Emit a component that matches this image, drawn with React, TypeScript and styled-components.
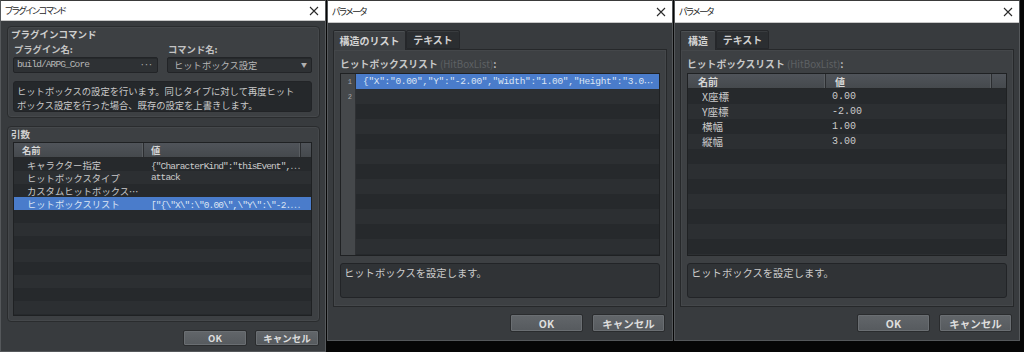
import React from 'react';
import styled, { createGlobalStyle } from 'styled-components';

const jp = `"Noto Sans CJK JP", "Noto Sans", sans-serif`;
const mono = `"Liberation Mono", "DejaVu Sans Mono", monospace`;

const GlobalStyle = createGlobalStyle`
  html, body { margin: 0; padding: 0; background: #060606; }
  body { font-family: ${jp}; }
  * { box-sizing: border-box; }
`;

const Screen = styled.div`
  display: flex;
  align-items: flex-start;
  gap: 1px;
  width: 1024px;
  height: 352px;
  overflow: hidden;
  background: #060606;
`;

const Window = styled.div<{ $w: number; $h: number }>`
  flex: none;
  width: ${p => p.$w}px;
  height: ${p => p.$h}px;
  display: flex;
  flex-direction: column;
  background: #383b3e;
  border: 1px solid #55585b;
  border-top-color: #3a3a3a;
`;

const TitleBar = styled.div<{ $h: number }>`
  flex: none;
  height: ${p => p.$h}px;
  background: #ffffff;
  display: flex;
  align-items: center;
  justify-content: space-between;
  padding: 0 6px 0 4px;
  border-bottom: 1px solid #c8c8c8;
`;

const TitleText = styled.span`
  font-family: ${jp};
  font-size: 9px;
  line-height: 12px;
  color: #1e1e1e;
  font-feature-settings: "palt";
  letter-spacing: -1.3px;
`;

const CloseSvg = styled.svg`
  width: 10px;
  height: 10px;
  flex: none;
`;

const CloseIcon = () => (
  <CloseSvg viewBox="0 0 10 10">
    <path d="M1 1 L9 9 M9 1 L1 9" stroke="#2a2a2a" strokeWidth="1.1" fill="none" />
  </CloseSvg>
);

/* ---------- Dialog 1 ---------- */

const CommandBody = styled.div`
  flex: 1;
  display: flex;
  flex-direction: column;
  gap: 8px;
  padding: 5px 5px 0 6px;
`;

const GroupBox = styled.div<{ $h: number }>`
  flex: none;
  height: ${p => p.$h}px;
  display: flex;
  flex-direction: column;
  background: #3d4043;
  border: 1px solid #2a2c2e;
  border-radius: 4px;
  box-shadow: inset 0 0 0 1px #45484b;
  padding: 0 7px 5px 5px;
`;

const GroupTitle = styled.div`
  height: 14px;
  line-height: 14px;
  margin-left: -2px;
  font-size: 9.5px;
  font-weight: 700;
  color: #cfcfcf;
  white-space: nowrap;
`;

const FieldGrid = styled.div`
  display: grid;
  grid-template-columns: 145px 145px;
  column-gap: 9px;
  margin-top: 2px;
`;

const Field = styled.div`
  display: flex;
  flex-direction: column;
  gap: 1px;
`;

const FieldLabel = styled.div`
  height: 13px;
  line-height: 13px;
  font-size: 9.3px;
  font-weight: 700;
  color: #c4c4c4;
  padding-left: 1px;
`;

const TextField = styled.div`
  height: 16px;
  display: flex;
  align-items: center;
  justify-content: space-between;
  background: #2e3134;
  border: 1px solid #222427;
  border-radius: 2px;
  box-shadow: inset 0 1px 0 #26292b;
  padding: 0 5px 0 3px;
  color: #b8b8b8;
`;

const FieldValue = styled.span<{ $mono?: boolean }>`
  font-family: ${p => (p.$mono ? mono : jp)};
  font-size: ${p => (p.$mono ? '9.5px' : '9.3px')};
  letter-spacing: ${p => (p.$mono ? '-0.9px' : '0')};
  line-height: 14px;
  white-space: nowrap;
  padding-left: ${p => (p.$mono ? '0' : '3px')};
`;

const FieldSuffix = styled.span<{ $size: number }>`
  font-size: ${p => p.$size}px;
  color: #b0b0b0;
  line-height: 14px;
  letter-spacing: -1px;
`;

const Description = styled.div<{ $h: number; $size: number; $bg: string; $mt: number }>`
  flex: none;
  height: ${p => p.$h}px;
  margin-top: ${p => p.$mt}px;
  background: ${p => p.$bg};
  border: 1px solid #222427;
  border-radius: 3px;
  padding: 2px 3px;
  font-size: ${p => p.$size}px;
  line-height: 14px;
  color: #cacaca;
  white-space: pre-line;
`;

/* ---------- Tables ---------- */

const Table = styled.div<{ $h?: number; $mt: number }>`
  ${p => (p.$h ? `height: ${p.$h}px; flex: none;` : 'flex: 1;')}
  margin-top: ${p => p.$mt}px;
  display: flex;
  flex-direction: column;
  overflow: hidden;
  background: #27292c;
  border: 1px solid #1f2123;
`;

const HeaderRow = styled.div<{ $h: number }>`
  flex: none;
  height: ${p => p.$h}px;
  display: flex;
  background: linear-gradient(#50545a, #45494d);
  border-bottom: 1px solid #26282a;
`;

const HeaderCell = styled.div<{ $w?: number; $pad: number; $size: number }>`
  ${p => (p.$w ? `width: ${p.$w}px; flex: none;` : 'flex: 1;')}
  padding-left: ${p => p.$pad}px;
  border-right: 1px solid #2b2d30;
  box-shadow: inset -1px 0 0 #5a5e62;
  font-size: ${p => p.$size}px;
  font-weight: 700;
  color: #d6d6d6;
  display: flex;
  align-items: center;
  white-space: nowrap;
  &:last-child { border-right: none; box-shadow: none; }
`;

const Row = styled.div<{ $h: number; $odd: boolean; $sel?: boolean }>`
  flex: none;
  height: ${p => p.$h}px;
  display: flex;
  align-items: center;
  background: ${p => (p.$sel ? '#4a7ccb' : p.$odd ? '#2c2f32' : '#26292c')};
  color: ${p => (p.$sel ? '#dbe5f4' : '#cacaca')};
  white-space: nowrap;
  overflow: hidden;
`;

const Cell = styled.div<{ $w?: number; $pad: number; $size: number; $mono?: boolean; $ls?: number }>`
  ${p => (p.$w ? `width: ${p.$w}px; flex: none;` : 'flex: 1; min-width: 0;')}
  padding-left: ${p => p.$pad}px;
  font-family: ${p => (p.$mono ? mono : jp)};
  font-size: ${p => p.$size}px;
  letter-spacing: ${p => p.$ls ?? 0}px;
  overflow: hidden;
  white-space: nowrap;
`;

const Ell = styled.span`
  font-family: ${jp};
  letter-spacing: -0.5px;
`;

/* ---------- Buttons ---------- */

const ButtonRow = styled.div<{ $pt: number; $pr: number; $gap: number }>`
  flex: none;
  display: flex;
  justify-content: flex-end;
  gap: ${p => p.$gap}px;
  padding-top: ${p => p.$pt}px;
  padding-right: ${p => p.$pr}px;
`;

const Button = styled.div<{ $w: number; $h: number; $size: number }>`
  width: ${p => p.$w}px;
  height: ${p => p.$h}px;
  display: flex;
  align-items: center;
  justify-content: center;
  background: linear-gradient(#62666a, #565a5e);
  border: 1px solid #2a2c2e;
  border-radius: 2px;
  box-shadow: inset 0 0 0 1px #6a6e72;
  font-size: ${p => p.$size}px;
  font-weight: 700;
  color: #dedede;
`;

/* ---------- Parameter dialogs ---------- */

const ParamBody = styled.div`
  flex: 1;
  display: flex;
  flex-direction: column;
  padding: 7px 5px 0 5px;
`;

const TabsRow = styled.div`
  flex: none;
  height: 19px;
  display: flex;
  align-items: flex-end;
`;

const Tab = styled.div<{ $w: number; $active?: boolean }>`
  width: ${p => p.$w}px;
  height: ${p => (p.$active ? 20 : 19)}px;
  margin-bottom: ${p => (p.$active ? -1 : 0)}px;
  position: relative;
  z-index: ${p => (p.$active ? 1 : 0)};
  display: flex;
  align-items: center;
  justify-content: center;
  background: ${p => (p.$active ? '#3d4043' : '#2b2e31')};
  border: 1px solid #25272a;
  border-bottom: ${p => (p.$active ? 'none' : '1px solid #25272a')};
  border-radius: 2px 2px 0 0;
  box-shadow: inset 0 1px 0 ${p => (p.$active ? '#4c5053' : '#393c3f')};
  font-size: 10px;
  font-weight: 700;
  color: ${p => (p.$active ? '#d4d4d4' : '#d0d0d0')};
  white-space: nowrap;
`;

const Panel = styled.div`
  flex: none;
  height: 258px;
  display: flex;
  flex-direction: column;
  background: #3d4043;
  border: 1px solid #26282a;
  box-shadow: inset 0 0 0 1px #44474a;
  padding: 0 6px 0 6px;
`;

const PanelLabel = styled.div`
  margin-top: 7px;
  height: 14px;
  line-height: 14px;
  font-size: 9.8px;
  font-weight: 700;
  color: #c8c8c8;
  white-space: nowrap;
`;

const Dim = styled.span`
  font-weight: 400;
  color: #5e6164;
`;

const Gutter = styled.div`
  width: 15px;
  flex: none;
  height: 100%;
  background: #45484b;
  border-right: 1px solid #2f3134;
  font-family: ${mono};
  font-size: 7px;
  color: #a8a8a8;
  display: flex;
  align-items: center;
  justify-content: flex-end;
  padding-right: 3px;
`;

const Line = styled.div<{ $sel?: boolean; $odd: boolean }>`
  flex: 1;
  height: 100%;
  min-width: 0;
  display: flex;
  align-items: center;
  padding-left: 7px;
  background: ${p => (p.$sel ? '#4a7ccb' : p.$odd ? '#2c2f32' : '#26292c')};
  color: #dbe5f4;
  font-family: ${mono};
  font-size: 9.5px;
  letter-spacing: -0.3px;
  overflow: hidden;
  white-space: nowrap;
`;

const ListRow = styled.div`
  flex: none;
  height: 15px;
  display: flex;
`;

const Spacer = styled.div`
  flex: 1;
`;

const d1Rows: { name: string; value: React.ReactNode }[] = [
  { name: 'キャラクター指定', value: <>{'{"CharacterKind":"thisEvent",'}<Ell>⋯</Ell></> },
  { name: 'ヒットボックスタイプ', value: 'attack' },
  { name: 'カスタムヒットボックス⋯', value: '' },
  { name: 'ヒットボックスリスト', value: <>{'["{\\"X\\":\\"0.00\\",\\"Y\\":\\"-2.'}<Ell>⋯</Ell></> },
];

const d3Rows = [
  { name: 'X座標', value: '0.00' },
  { name: 'Y座標', value: '-2.00' },
  { name: '横幅', value: '1.00' },
  { name: '縦幅', value: '3.00' },
];

function ParamDialog({ variant }: { variant: 'list' | 'struct' }) {
  return (
    <Window $w={346} $h={341}>
      <TitleBar $h={22}>
        <TitleText>パラメータ</TitleText>
        <CloseIcon />
      </TitleBar>
      <ParamBody>
        <TabsRow>
          {variant === 'list' ? (
            <>
              <Tab $w={73} $active>構造のリスト</Tab>
              <Tab $w={54}>テキスト</Tab>
            </>
          ) : (
            <>
              <Tab $w={36} $active>構造</Tab>
              <Tab $w={53}>テキスト</Tab>
            </>
          )}
        </TabsRow>
        <Panel>
          <PanelLabel>
            ヒットボックスリスト <Dim>(HitBoxList)</Dim>:
          </PanelLabel>
          {variant === 'list' ? (
            <Table $h={183} $mt={2}>
              {Array.from({ length: 13 }).map((_, i) => (
                <ListRow key={i}>
                  <Gutter>{i < 2 ? i + 1 : ''}</Gutter>
                  <Line $sel={i === 0} $odd={i % 2 === 1}>
                    {i === 0 ? (
                      <>
                        {'{"X":"0.00","Y":"-2.00","Width":"1.00","Height":"3.0'}
                        <Ell>⋯</Ell>
                      </>
                    ) : (
                      ''
                    )}
                  </Line>
                </ListRow>
              ))}
            </Table>
          ) : (
            <Table $h={183} $mt={2}>
              <HeaderRow $h={15}>
                <HeaderCell $w={138} $pad={10} $size={10}>名前</HeaderCell>
                <HeaderCell $pad={9} $size={10}>値</HeaderCell>
                <HeaderCell $w={14} $pad={0} $size={10}></HeaderCell>
              </HeaderRow>
              {Array.from({ length: 12 }).map((_, i) => (
                <Row key={i} $h={15} $odd={i % 2 === 1}>
                  <Cell $w={139} $pad={14} $size={10.5}>{d3Rows[i]?.name ?? ''}</Cell>
                  <Cell $pad={5} $size={10} $mono>{d3Rows[i]?.value ?? ''}</Cell>
                </Row>
              ))}
            </Table>
          )}
          <Description $h={35} $size={10.3} $bg="#303336" $mt={7}>
            ヒットボックスを設定します。
          </Description>
        </Panel>
        <ButtonRow $pt={7} $pr={2} $gap={9}>
          <Button $w={73} $h={18} $size={10.5}>OK</Button>
          <Button $w={73} $h={18} $size={10.5}>キャンセル</Button>
        </ButtonRow>
        <Spacer />
      </ParamBody>
    </Window>
  );
}

export default function App() {
  return (
    <>
      <GlobalStyle />
      <Screen>
        <Window $w={326} $h={352}>
          <TitleBar $h={20}>
            <TitleText>プラグインコマンド</TitleText>
            <CloseIcon />
          </TitleBar>
          <CommandBody>
            <GroupBox $h={92}>
              <GroupTitle>プラグインコマンド</GroupTitle>
              <FieldGrid>
                <Field>
                  <FieldLabel>プラグイン名:</FieldLabel>
                  <TextField>
                    <FieldValue $mono>build/ARPG_Core</FieldValue>
                    <FieldSuffix $size={9}>···</FieldSuffix>
                  </TextField>
                </Field>
                <Field>
                  <FieldLabel>コマンド名:</FieldLabel>
                  <TextField>
                    <FieldValue>ヒットボックス設定</FieldValue>
                    <FieldSuffix $size={6}>▼</FieldSuffix>
                  </TextField>
                </Field>
              </FieldGrid>
              <Description $h={31} $size={9.3} $bg="#25282b" $mt={8}>
                {'ヒットボックスの設定を行います。同じタイプに対して再度ヒット\nボックス設定を行った場合、既存の設定を上書きします。'}
              </Description>
            </GroupBox>
            <GroupBox $h={196}>
              <GroupTitle>引数</GroupTitle>
              <Table $mt={1}>
                <HeaderRow $h={15}>
                  <HeaderCell $w={130} $pad={8} $size={9.3}>名前</HeaderCell>
                  <HeaderCell $pad={7} $size={9.3}>値</HeaderCell>
                  <HeaderCell $w={10} $pad={0} $size={9.3}></HeaderCell>
                </HeaderRow>
                {Array.from({ length: 13 }).map((_, i) => (
                  <Row key={i} $h={13} $odd={i % 2 === 1} $sel={i === 3}>
                    <Cell $w={130} $pad={13} $size={9.3}>{d1Rows[i]?.name ?? ''}</Cell>
                    <Cell $pad={7} $size={9.5} $mono $ls={-0.9}>{d1Rows[i]?.value ?? ''}</Cell>
                  </Row>
                ))}
              </Table>
            </GroupBox>
            <ButtonRow $pt={0} $pr={1} $gap={8}>
              <Button $w={64} $h={16} $size={9.5}>OK</Button>
              <Button $w={64} $h={16} $size={9.5}>キャンセル</Button>
            </ButtonRow>
          </CommandBody>
        </Window>
        <ParamDialog variant="list" />
        <ParamDialog variant="struct" />
      </Screen>
    </>
  );
}
